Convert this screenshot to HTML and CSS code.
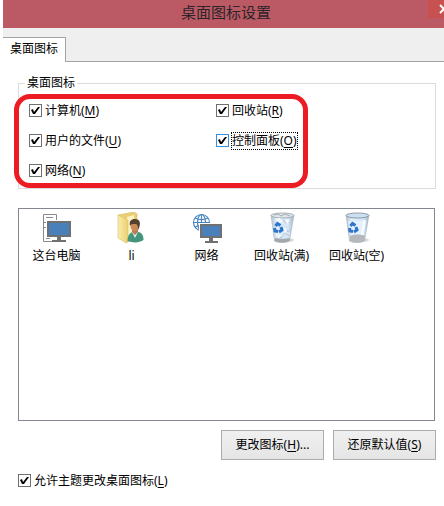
FILE: index.html
```
<!DOCTYPE html>
<html lang="zh-CN">
<head>
    <meta charset="UTF-8">
    <meta name="viewport" content="width=device-width, initial-scale=1.0">
    <title>桌面图标设置</title>
    <link rel="stylesheet" href="styles.css">
</head>
<body>

    <div class="dialog">

        <!-- 标题栏 -->
        <header class="title-bar">
            <h1>桌面图标设置</h1>
            <button type="button" class="close" aria-label="关闭">
                <svg width="10" height="10" viewBox="0 0 10 10"><path d="M1 1l8 8M9 1l-8 8" stroke="#fff" stroke-width="2"/></svg>
            </button>
        </header>

        <!-- 选项卡 -->
        <nav class="tabs">
            <button type="button" class="tab">桌面图标</button>
        </nav>

        <main class="panel">

            <fieldset class="group">
                <legend>桌面图标</legend>
                <div class="options">
                    <label class="check"><input type="checkbox" checked><span>计算机(<u>M</u>)</span></label>
                    <label class="check"><input type="checkbox" checked><span>回收站(<u>R</u>)</span></label>
                    <label class="check"><input type="checkbox" checked><span>用户的文件(<u>U</u>)</span></label>
                    <label class="check focused"><input type="checkbox" checked><span>控制面板(<u>O</u>)</span></label>
                    <label class="check"><input type="checkbox" checked><span>网络(<u>N</u>)</span></label>
                </div>
                <!-- 红色标记框 -->
                <div class="mark"></div>
            </fieldset>

            <!-- 图标列表 -->
            <ul class="icons">
                <li>
                    <svg width="32" height="32" viewBox="0 0 32 32">
                        <path d="M15.500 9V2.500h-13v27h12" fill="#fff" stroke="#8a8a8a"/>
                        <path d="M5 5.500h7M3 10.500h4M3 15.500h4M5 26.500h4" stroke="#8a8a8a"/>
                        <rect x="7" y="10" width="22" height="14" fill="#4a80ba" stroke="#fff" stroke-width="4"/>
                        <rect x="7" y="10" width="22" height="14" fill="#4a80ba" stroke="#6e7072" stroke-width="2"/>
                        <path d="M16 25h4v3h5v2H11v-2h5z" fill="#6e7072"/>
                    </svg>
                    <span>这台电脑</span>
                </li>
                <li>
                    <svg width="32" height="32" viewBox="0 0 32 32">
                        <defs>
                            <linearGradient id="folder" x1="0" x2="1"><stop offset="0" stop-color="#faedac"/><stop offset="1" stop-color="#ebcf72"/></linearGradient>
                        </defs>
                        <path d="M2 3L18 0l3 2v25l-11 3z" fill="#e9ce74" stroke="#d8bc62" stroke-width=".6"/>
                        <path d="M11 5l7-2v20l-7 3z" fill="#fdf3c8"/>
                        <path d="M2 3l8 4 2 1v22l-2 1-8-5z" fill="url(#folder)" stroke="#dcc16b" stroke-width=".6"/>
                        <path d="M11.500 29c0-5 2-8 5-9h6c4 1 5 4 5 8-4 3-11 3-16 1z" fill="#43967c"/>
                        <path d="M16 20l3 6 3-6z" fill="#e4f1ed"/>
                        <path d="M16 16h6v4l-3 3-3-3z" fill="#b97c50"/>
                        <ellipse cx="18.500" cy="14" rx="4" ry="5" fill="#c98b59"/>
                        <path d="M14 14c-1-5 1-7 5-7 5 0 6 4 4 9l-1 2c0-5-1-6-3-6-3 0-4 0-5 2z" fill="#54402c"/>
                    </svg>
                    <span>li</span>
                </li>
                <li>
                    <svg width="32" height="32" viewBox="0 0 32 32">
                        <g fill="none" stroke="#4a86c2" stroke-width="1.200">
                            <circle cx="10.500" cy="10.500" r="8"/>
                            <ellipse cx="10.500" cy="10.500" rx="4" ry="8"/>
                            <path d="M10.500 2.500v16M2.500 10.500h16M4 6c4 2 9 2 13 0M4 15c4-2 9-2 13 0"/>
                        </g>
                        <rect x="10" y="13" width="20" height="12" fill="#4a80ba" stroke="#fff" stroke-width="4"/>
                        <rect x="10" y="13" width="20" height="12" fill="#4a80ba" stroke="#6e7072" stroke-width="2"/>
                        <path d="M18 26h4v3h5v2H14v-2h4z" fill="#6e7072"/>
                    </svg>
                    <span>网络</span>
                </li>
                <li>
                    <svg width="32" height="32" viewBox="0 0 32 32">
                        <defs>
                            <linearGradient id="bin" x1="0" x2="1"><stop offset="0" stop-color="#b4c3d2"/><stop offset=".25" stop-color="#dfeefa"/><stop offset=".75" stop-color="#d3e6f7"/><stop offset="1" stop-color="#a9b6c3"/></linearGradient>
                            <g id="arrows" fill="none" stroke="#2f74cc" stroke-width="3">
                                <path d="M9.500 14l2-2.500 3 2"/>
                                <path d="M15 15l1 3-3 2"/>
                                <path d="M12 19.500l-3-.5-.5-3"/>
                            </g>
                        </defs>
                        <ellipse cx="19" cy="28" rx="9" ry="2" fill="#d8d8d8"/>
                        <path d="M5 3h23l-4.500 26c-4 2-11 2-15 0z" fill="url(#bin)" stroke="#a9b6c3" stroke-width=".6"/>
                        <path d="M9 26c4 1 11 1 15 0l-.5 3c-4 2-11 2-15 0z" fill="#a3a8ad"/>
                        <ellipse cx="16.500" cy="3.500" rx="11.500" ry="2.500" fill="#dfe5e9" stroke="#8e989f" stroke-width=".7"/>
                        <path d="M8 3l4-1 3 2 4-2 5 2" fill="none" stroke="#a4aeb6"/>
                        <path d="M17 8l4 4 4-4M19 16l3 4 3-3M11 23l4 3 4-5 4 3" fill="none" stroke="#b5c4d2"/>
                        <path d="M9 7l5-1 3 4-4 1zM19 7l5 1-3 5zM17 15l4 2-2 5zM10 22l5 1-2 3z" fill="#f6fafd"/>
                        <use href="#arrows"/>
                    </svg>
                    <span>回收站(满)</span>
                </li>
                <li>
                    <svg width="32" height="32" viewBox="0 0 32 32">
                        <ellipse cx="19" cy="28" rx="9" ry="2" fill="#d8d8d8"/>
                        <path d="M5 3h23l-4.500 26c-4 2-11 2-15 0z" fill="url(#bin)" stroke="#a9b6c3" stroke-width=".6"/>
                        <path d="M7 9h18l-2 14H10z" fill="#e4f1fd"/>
                        <path d="M9 24c4-2 11-2 15 0l-.5 5c-4 2-11 2-15 0z" fill="#b4b8bb"/>
                        <ellipse cx="16.500" cy="3.500" rx="11.500" ry="2.500" fill="#cbe0f2" stroke="#7c8790" stroke-width=".8"/>
                        <path d="M22 8h3l-3 15h-2z" fill="#fff" opacity=".7"/>
                        <use href="#arrows"/>
                    </svg>
                    <span>回收站(空)</span>
                </li>
            </ul>

            <div class="actions">
                <button type="button" class="btn">更改图标(<u>H</u>)...</button>
                <button type="button" class="btn">还原默认值(<u>S</u>)</button>
            </div>

            <label class="check"><input type="checkbox" checked><span>允许主题更改桌面图标(<u>L</u>)</span></label>

        </main>
    </div>

</body>
</html>
```
FILE: styles.css
```
* {
    box-sizing: border-box;
}

body {
    margin: 0;
    background: #fff;
    color: #000;
    font: 12px/18px "Noto Sans", "Noto Sans CJK SC", sans-serif;
}

button {
    font: inherit;
    color: inherit;
}

u {
    text-underline-offset: 2px;
}

.dialog {
    margin-left: 3px;
}

/* 标题栏 */
.title-bar {
    position: relative;
    height: 28px;
    padding-left: 5px;
    overflow: hidden;
    background: #bb5a64;
    text-align: center;
}

.title-bar h1 {
    margin: 0;
    font-size: 15px;
    font-weight: normal;
    line-height: 24px;
    color: #2b2428;
}

.close {
    position: absolute;
    top: 0;
    right: -16px;
    display: flex;
    align-items: center;
    justify-content: center;
    width: 32px;
    height: 18px;
    padding: 0;
    border: 0;
    background: #c75050;
}

/* 选项卡 */
.tabs {
    display: flex;
    align-items: flex-end;
    height: 34px;
    background: #efefef;
    box-shadow: inset 0 -1px #a3a3a3;
}

.tab {
    height: 25px;
    padding: 0 7px 2px;
    border: 1px solid #a3a3a3;
    border-width: 1px 1px 0 0;
    background: #fff;
}

.panel {
    padding: 12px 8px 12px 15px;
}

/* 复选框分组 */
.group {
    position: relative;
    min-width: 0;
    margin: 0;
    padding: 10px 10px 9px;
    border: 1px solid #dcdcdc;
}

.group legend {
    margin-left: -4px;
    padding: 0 2px;
}

.options {
    display: grid;
    grid-template-columns: 187px 1fr;
    row-gap: 13px;
}

.check {
    display: flex;
    align-items: center;
    justify-self: start;
    gap: 3px;
    height: 17px;
    line-height: 16px;
}

.check input {
    appearance: none;
    width: 13px;
    height: 13px;
    margin: 0;
    border: 1px solid #707070;
    background: #fff;
}

.check input:checked::before {
    content: "";
    display: block;
    width: 11px;
    height: 11px;
    background: #000;
    clip-path: polygon(1px 5px, 3px 4px, 4px 7px, 8px 2px, 10px 2px, 5px 9px, 3px 9px);
}

.focused input {
    border-color: #3390e0;
}

.focused span {
    outline: 1px dotted #000;
}

.mark {
    position: absolute;
    top: 2px;
    left: -5px;
    width: 294px;
    height: 94px;
    border: 5px solid #ed1c24;
    border-radius: 16px;
    pointer-events: none;
}

/* 图标列表 */
.icons {
    display: flex;
    min-height: 213px;
    margin: 19px 1px 9px 0;
    padding: 3px 0;
    border: 1px solid #828790;
    list-style: none;
}

.icons li {
    display: flex;
    flex-direction: column;
    align-items: center;
    width: 75px;
    gap: 3px;
}

/* 按钮 */
.actions {
    display: flex;
    justify-content: flex-end;
    gap: 9px;
    margin-bottom: 12px;
}

.btn {
    width: 103px;
    height: 30px;
    padding: 0;
    border: 1px solid #acacac;
    background: linear-gradient(#f0f0f0, #e5e5e5);
}
```
